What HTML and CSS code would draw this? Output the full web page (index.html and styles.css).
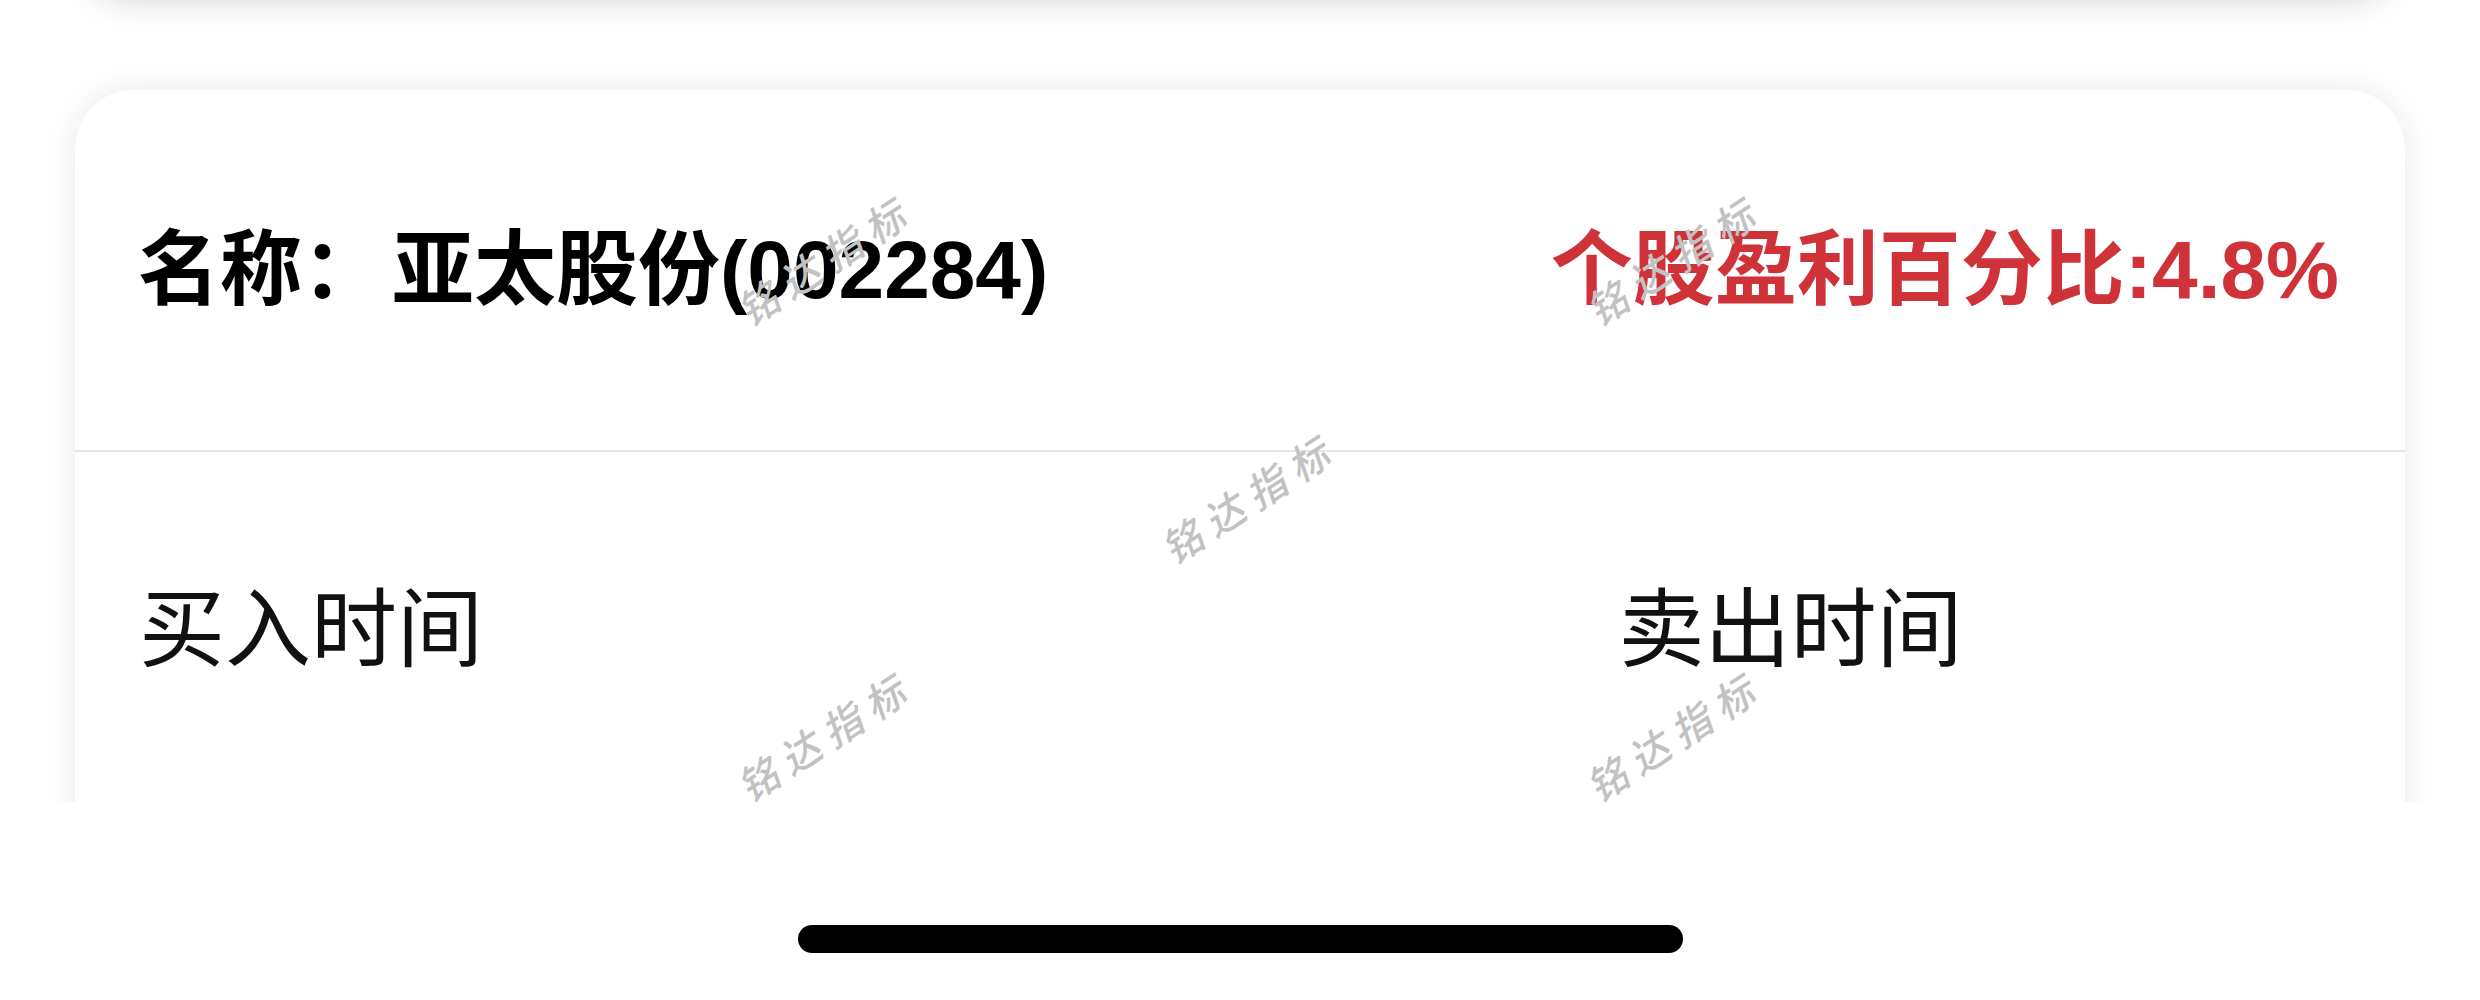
FILE: index.html
```html
<!DOCTYPE html>
<html lang="zh-CN">
<head>
    <meta charset="UTF-8">
    <meta name="viewport" content="width=device-width, initial-scale=1.0">
    <title>交易记录</title>
    <link rel="stylesheet" href="styles.css">
</head>
<body>
    <div class="screen">
        <div class="content">
            <div class="prev-card"></div>

            <div class="trade-card">
                <div class="trade-head">
                    <div class="stock-name">名称：<span class="stock-title">亚太股份(002284)</span></div>
                    <div class="stock-profit">个股盈利百分比:4.8%</div>
                </div>
                <div class="trade-cols">
                    <div class="col-title">买入时间</div>
                    <div class="col-title col-center">卖出时间</div>
                </div>
            </div>
        </div>

        <div class="home-area">
            <div class="home-indicator"></div>
        </div>

        <!-- 水印 -->
        <div class="watermark wm-1">铭达指标</div>
        <div class="watermark wm-2">铭达指标</div>
        <div class="watermark wm-3">铭达指标</div>
        <div class="watermark wm-4">铭达指标</div>
        <div class="watermark wm-5">铭达指标</div>
    </div>
</body>
</html>
```

FILE: styles.css
```css
body, html {
    margin: 0;
    padding: 0;
    background: #fff;
}

body {
    font-family: "Liberation Sans", "Noto Sans CJK SC", sans-serif;
    color: #000;
}

.screen {
    position: relative;
    width: 2480px;
    height: 1000px;
    display: flex;
    flex-direction: column;
    overflow: hidden;
}

.content {
    height: 802px;
    overflow: hidden;
    padding: 0 75px;
}

/* 上一张卡片，只露出阴影 */
.prev-card {
    height: 80px;
    margin-top: -88px;
    margin-bottom: 98px;
    background: #fff;
    border-radius: 0 0 58px 58px;
    box-shadow: 0 12px 32px -4px rgba(0, 0, 0, 0.18);
}

.trade-card {
    background: #fff;
    border-radius: 58px 58px 0 0;
    box-shadow: 0 0 30px rgba(0, 0, 0, 0.09);
    padding-bottom: 300px;
}

.trade-head {
    height: 360px;
    display: flex;
    align-items: center;
    justify-content: space-between;
    padding: 0 66px 0 63px;
    border-bottom: 2px solid #e6e6e6;
    font-weight: bold;
    font-size: 82px;
    line-height: 100px;
}

.stock-title {
    margin-left: 8px;
}

.stock-profit {
    color: #d0323a;
    font-size: 82px;
}

.trade-cols {
    display: grid;
    grid-template-columns: 1fr 1fr;
    padding: 128px 64px 0 64px;
}

.col-title {
    font-size: 86px;
    line-height: 100px;
    color: #111;
}

.col-center {
    text-align: center;
}

.home-area {
    flex: 1;
    display: flex;
    justify-content: center;
    padding-top: 123px;
}

.home-indicator {
    width: 885px;
    height: 28px;
    border-radius: 14px;
    background: #000;
}

.watermark {
    position: absolute;
    font-family: "Noto Sans CJK SC", sans-serif;
    font-size: 40px;
    font-weight: 500;
    font-style: italic;
    letter-spacing: 10px;
    color: #c2c2c2;
    white-space: nowrap;
    transform: translate(-50%, -50%) rotate(-33deg);
    pointer-events: none;
}

.wm-1 { left: 824px; top: 259px; }
.wm-2 { left: 1673px; top: 259px; }
.wm-3 { left: 1248px; top: 497px; }
.wm-4 { left: 824px; top: 735px; }
.wm-5 { left: 1673px; top: 735px; }
```
